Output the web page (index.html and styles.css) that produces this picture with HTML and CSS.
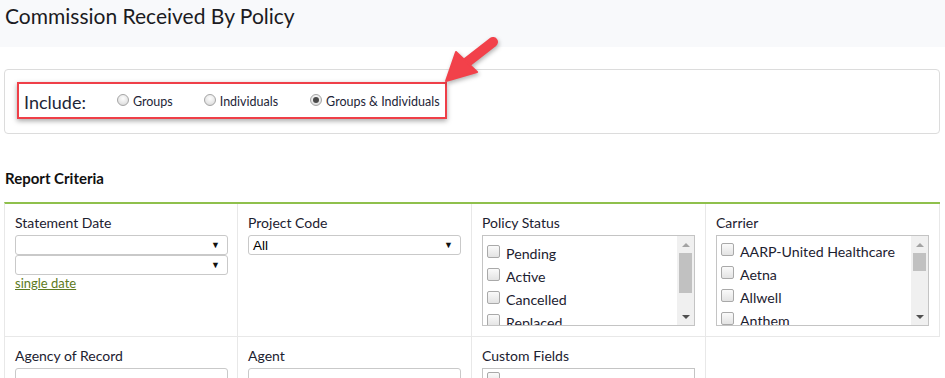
FILE: index.html
```html
<!DOCTYPE html>
<html lang="en">
<head>
<meta charset="utf-8">
<title>Commission Received By Policy</title>
<link rel="stylesheet" href="styles.css">
</head>
<body>
<header class="page-head">
  <h1 class="page-title">Commission Received By Policy</h1>
</header>

<section class="include-panel">
  <div class="include-box">
    <span class="include-label">Include:</span>
    <label class="radio"><span class="radio-dot"></span>Groups</label>
    <label class="radio"><span class="radio-dot"></span>Individuals</label>
    <label class="radio"><span class="radio-dot checked"></span>Groups &amp; Individuals</label>
  </div>
</section>

<svg class="callout-arrow" width="70" height="60" viewBox="436 32 70 60" aria-hidden="true">
  <line x1="493" y1="42" x2="466" y2="63" stroke="#f2414a" stroke-width="10" stroke-linecap="round"/>
  <polygon points="456,52 477,72 446,81" fill="#f2414a" stroke="#f2414a" stroke-width="2" stroke-linejoin="round"/>
</svg>

<h2 class="section-title">Report Criteria</h2>

<div class="criteria">
  <div class="cell">
    <div class="field-label">Statement Date</div>
    <div class="select"><span class="select-text"></span><span class="caret">▼</span></div>
    <div class="select"><span class="select-text"></span><span class="caret">▼</span></div>
    <a class="link" href="#">single date</a>
  </div>
  <div class="cell">
    <div class="field-label">Project Code</div>
    <div class="select"><span class="select-text">All</span><span class="caret">▼</span></div>
  </div>
  <div class="cell">
    <div class="field-label">Policy Status</div>
    <div class="listbox">
      <ul class="options options-policy">
        <li><span class="check"></span>Pending</li>
        <li><span class="check"></span>Active</li>
        <li><span class="check"></span>Cancelled</li>
        <li><span class="check"></span>Replaced</li>
      </ul>
      <div class="scrollbar">
        <span class="sb-up"></span>
        <div class="sb-track"><span class="sb-thumb thumb-tall"></span></div>
        <span class="sb-down"></span>
      </div>
    </div>
  </div>
  <div class="cell">
    <div class="field-label">Carrier</div>
    <div class="listbox">
      <ul class="options options-carrier">
        <li><span class="check"></span>AARP-United Healthcare</li>
        <li><span class="check"></span>Aetna</li>
        <li><span class="check"></span>Allwell</li>
        <li><span class="check"></span>Anthem</li>
      </ul>
      <div class="scrollbar">
        <span class="sb-up"></span>
        <div class="sb-track"><span class="sb-thumb thumb-short"></span></div>
        <span class="sb-down"></span>
      </div>
    </div>
  </div>

  <div class="cell">
    <div class="field-label">Agency of Record</div>
    <input class="text-input" type="text" placeholder="Search agency">
  </div>
  <div class="cell">
    <div class="field-label">Agent</div>
    <input class="text-input" type="text" placeholder="Search agent">
  </div>
  <div class="cell">
    <div class="field-label">Custom Fields</div>
    <div class="listbox listbox-short">
      <ul class="options options-custom">
        <li><span class="check"></span></li>
      </ul>
    </div>
  </div>
</div>
</body>
</html>
```

FILE: styles.css
```css
* { box-sizing: border-box; }

html, body {
  margin: 0;
  padding: 0;
  background: #fff;
  overflow: hidden;
}

body {
  position: relative;
  font-family: Lato, "Open Sans", "Liberation Sans", sans-serif;
  color: #222;
  width: 945px;
}

.page-head {
  height: 47px;
  background: #f8f9fb;
  padding: 4px 0 0 5px;
}

.page-title {
  margin: 0;
  font-size: 21px;
  line-height: 24px;
  font-weight: 400;
  color: #1b1b22;
}

.include-panel {
  margin: 22px 5px 0 4px;
  height: 65px;
  border: 1px solid #dcdcdc;
  border-radius: 4px;
  padding: 12px 0 0 12px;
}

.include-box {
  display: flex;
  align-items: center;
  width: 430px;
  height: 37px;
  border: 2px solid #ef3f48;
  box-shadow: 0 2px 5px rgba(0, 0, 0, 0.35);
  padding: 2px 0 0 5px;
}

.include-label {
  font-size: 18px;
  color: #1e2537;
  margin-right: 31px;
}

.radio {
  display: flex;
  align-items: center;
  font-size: 12.5px;
  color: #1e2537;
  margin-right: 31px;
}

.radio:nth-of-type(2) { margin-right: 32px; }
.radio:last-child { margin-right: 0; }

.radio-dot {
  width: 12px;
  height: 12px;
  border-radius: 50%;
  border: 1px solid #a5a5a5;
  background: radial-gradient(circle at 50% 35%, #fdfdfd 0%, #e6e6e6 60%, #d0d0d0 100%);
  margin-right: 4px;
  position: relative;
  top: -2px;
}

.radio-dot.checked::after {
  content: "";
  position: absolute;
  left: 2px;
  top: 2px;
  width: 6px;
  height: 6px;
  border-radius: 50%;
  background: #4a4a4a;
}

.callout-arrow {
  position: absolute;
  left: 436px;
  top: 32px;
  filter: drop-shadow(1px 2px 2px rgba(0, 0, 0, 0.3));
}

.section-title {
  margin: 34px 0 0 5px;
  font-size: 15px;
  line-height: 20px;
  font-weight: 700;
  color: #111;
}

.criteria {
  margin: 14px 5px 0 4px;
  border-top: 2px solid #8fc04c;
  border-left: 1px solid #e8e8e8;
  display: grid;
  grid-template-columns: 233px 234px 234px 234px;
}

.cell {
  border-right: 1px solid #e8e8e8;
  border-bottom: 1px solid #e8e8e8;
  padding: 9px 9px 10px 10px;
}

.field-label {
  font-size: 14px;
  line-height: 20px;
  margin-bottom: 2px;
  color: #1c2130;
}

.select {
  display: flex;
  align-items: center;
  justify-content: space-between;
  width: 213px;
  height: 20px;
  border: 1px solid #c9c9c9;
  border-radius: 3px;
  padding: 0 7px 0 4px;
  font-family: "Liberation Sans", Arial, sans-serif;
  font-size: 13.5px;
  color: #000;
}

.caret {
  font-size: 9px;
  color: #111;
}

.link {
  display: block;
  font-size: 13px;
  line-height: 15px;
  margin-top: 1px;
  color: #5e7a22;
  text-decoration: underline;
}

.listbox {
  display: flex;
  width: 213px;
  height: 91px;
  border: 1px solid #c4c4c4;
  overflow: hidden;
}

.listbox-short { height: 40px; }

.options {
  flex: 1;
  list-style: none;
  margin: 0;
  padding: 6px 0 0 4px;
  overflow: hidden;
}

.options-carrier { padding-top: 4px; }
.options-custom { padding-top: 0; }

.options li {
  display: flex;
  align-items: center;
  height: 23px;
  font-size: 14.2px;
  color: #1c2130;
  white-space: nowrap;
}

.check {
  flex: none;
  width: 13px;
  height: 13px;
  border: 1px solid #a9a9a9;
  border-radius: 2px;
  background: linear-gradient(#fafafa, #e3e3e3);
  margin-right: 6px;
  position: relative;
  top: -2px;
}

.scrollbar {
  width: 17px;
  flex: none;
  background: #f0f0f0;
  display: flex;
  flex-direction: column;
  align-items: center;
}

.sb-up,
.sb-down {
  flex: none;
  height: 17px;
  display: flex;
  align-items: center;
  justify-content: center;
}

.sb-up::before {
  content: "";
  border-left: 4px solid transparent;
  border-right: 4px solid transparent;
  border-bottom: 4px solid #a3a3a3;
}

.sb-down::before {
  content: "";
  border-left: 4px solid transparent;
  border-right: 4px solid transparent;
  border-top: 4px solid #505050;
}

.sb-track {
  flex: 1;
  width: 13px;
}

.sb-thumb {
  display: block;
  width: 13px;
  background: #c1c1c1;
}

.thumb-tall { height: 40px; }
.thumb-short { height: 18px; }

.text-input {
  display: block;
  width: 213px;
  height: 30px;
  border: 1px solid #c9c9c9;
  border-radius: 3px;
  padding: 0 6px;
  font-family: Lato, "Open Sans", sans-serif;
  font-size: 14px;
  color: #333;
  outline: none;
}

.text-input::placeholder { color: #b5b5b5; }
```
